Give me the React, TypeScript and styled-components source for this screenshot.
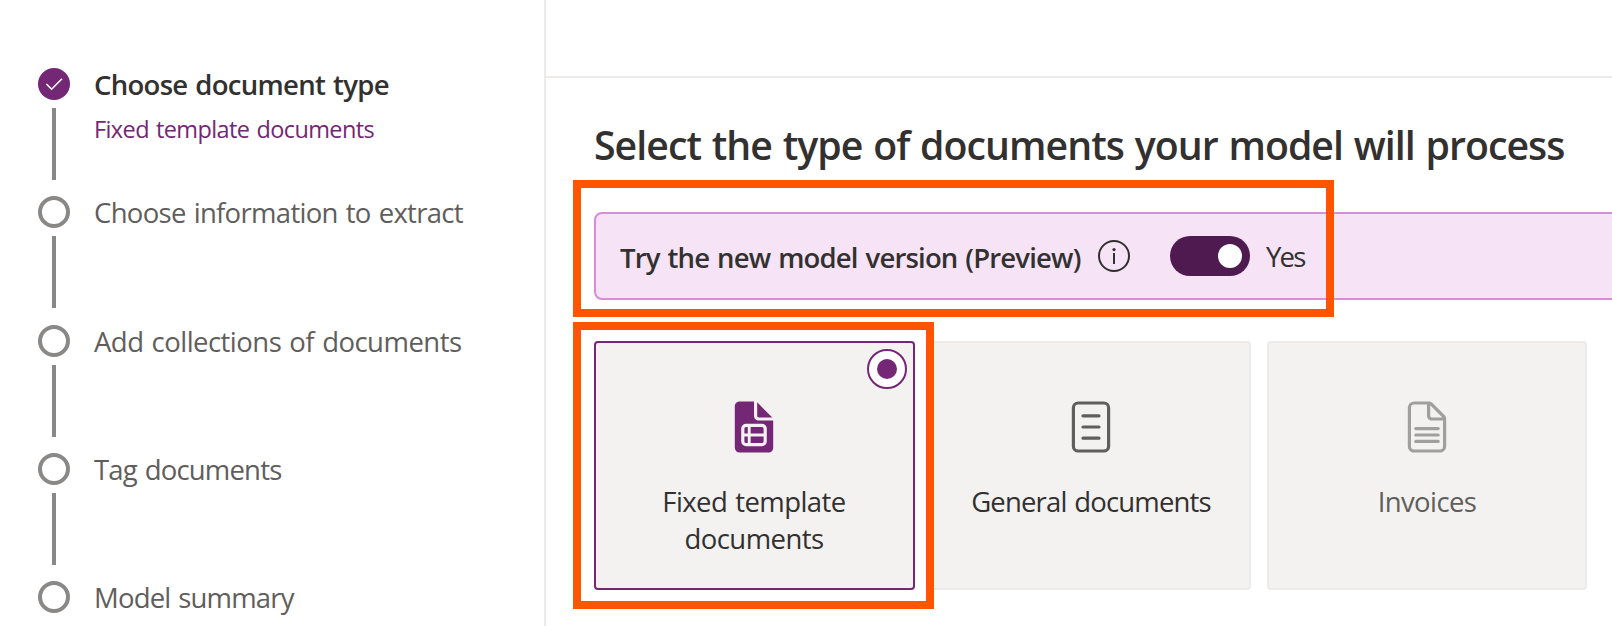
import React from "react";
import styled, { createGlobalStyle } from "styled-components";

const color = {
  purple: "#742774",
  deepPurple: "#4f1a4f",
  text: "#323130",
  muted: "#605e5c",
  disabled: "#a19f9d",
  rail: "#8a8886",
  line: "#edebe9",
  surface: "#f3f2f1",
  callout: "#ff5500",
};

const GlobalStyle = createGlobalStyle`
  *, *::before, *::after { box-sizing: border-box; }
  body {
    margin: 0;
    overflow: hidden;
    background: #fff;
    font-family: "Open Sans", "Noto Sans", sans-serif;
    word-spacing: 1.5px;
    color: ${color.text};
  }
`;

const Page = styled.div`
  position: relative;
  display: flex;
  width: 1612px;
  height: 626px;
  overflow: hidden;
`;

const Sidebar = styled.nav`
  flex: none;
  width: 546px;
  height: 100%;
  padding: 68px 0 0 38px;
  border-right: 2px solid ${color.line};
`;

const StepList = styled.ol`
  list-style: none;
  margin: 0;
  padding: 0;
`;

const Step = styled.li`
  display: flex;
  gap: 24px;
  height: 128.25px;
`;

const Rail = styled.div`
  display: flex;
  flex: none;
  flex-direction: column;
  align-items: center;
  gap: 8px;
  width: 32px;
`;

const StepCircle = styled.span<{ $done?: boolean }>`
  display: flex;
  flex: none;
  align-items: center;
  justify-content: center;
  width: 32px;
  height: 32px;
  border-radius: 50%;
  border: ${(p) => (p.$done ? "none" : `4px solid ${color.rail}`)};
  background: ${(p) => (p.$done ? color.purple : "#fff")};
`;

const Connector = styled.span`
  width: 4px;
  height: 72px;
  background: ${color.rail};
`;

const StepText = styled.div`
  margin-top: -1px;
  white-space: nowrap;
`;

const StepLabel = styled.div<{ $active?: boolean; $tracking: number }>`
  font-size: 27.5px;
  line-height: 36px;
  font-weight: ${(p) => (p.$active ? 600 : 400)};
  color: ${(p) => (p.$active ? color.text : color.muted)};
  letter-spacing: ${(p) => p.$tracking}px;
`;

const StepDetail = styled.div`
  margin-top: 10px;
  font-size: 23.5px;
  line-height: 32px;
  letter-spacing: -0.6px;
  color: ${color.purple};
`;

const Main = styled.main`
  flex: 1;
  min-width: 0;
`;

const TopBar = styled.div`
  height: 78px;
  border-bottom: 2px solid ${color.line};
`;

const Content = styled.section`
  padding: 41px 0 0 48px;
`;

const Title = styled.h1`
  margin: 0 0 41px;
  font-size: 39.25px;
  line-height: 52px;
  font-weight: 600;
  letter-spacing: -0.96px;
  white-space: nowrap;
`;

const PreviewBanner = styled.div`
  display: flex;
  align-items: center;
  width: 1100px;
  height: 88px;
  padding-left: 24px;
  border: 2px solid #d98cd9;
  border-radius: 8px;
  background: #f6e3f6;
  white-space: nowrap;
`;

const BannerLabel = styled.span`
  flex: none;
  width: 462px;
  margin-right: 16px;
  padding-top: 4px;
  font-size: 27.5px;
  line-height: 36px;
  font-weight: 600;
  letter-spacing: -0.82px;
`;

const Toggle = styled.button`
  display: flex;
  flex: none;
  align-items: center;
  justify-content: flex-end;
  width: 80px;
  height: 40px;
  margin: 0 16px 0 40px;
  padding: 0 8px;
  border: 0;
  border-radius: 20px;
  background: ${color.deepPurple};
`;

const Knob = styled.span`
  width: 24px;
  height: 24px;
  border-radius: 50%;
  background: #fff;
`;

const ToggleState = styled.span`
  padding-top: 2px;
  font-size: 27.5px;
  line-height: 36px;
  letter-spacing: -1.8px;
`;

const Cards = styled.div`
  display: grid;
  grid-template-columns: 321px 320px 320px;
  gap: 16px;
  margin-top: 41px;
`;

const Card = styled.div<{ $selected?: boolean; $disabled?: boolean }>`
  position: relative;
  display: flex;
  flex-direction: column;
  align-items: center;
  gap: 24px;
  height: 249px;
  padding: 52px ${(p) => (p.$selected ? 21 : 20)}px 0 20px;
  border: 2px solid ${(p) => (p.$selected ? color.purple : color.line)};
  border-radius: 4px;
  background: ${color.surface};
  color: ${(p) => (p.$disabled ? color.muted : color.text)};
`;

const CardIcon = styled.svg<{ $tone: string }>`
  flex: none;
  width: 64px;
  height: 64px;
  color: ${(p) => p.$tone};
`;

const CardLabel = styled.div<{ $tracking: number }>`
  font-size: 27.5px;
  line-height: 37px;
  text-align: center;
  letter-spacing: ${(p) => p.$tracking}px;
`;

const Radio = styled.span`
  position: absolute;
  top: 6px;
  right: 6px;
  display: flex;
  align-items: center;
  justify-content: center;
  width: 40px;
  height: 40px;
  border: 2px solid ${color.purple};
  border-radius: 50%;
  background: #fff;

  &::after {
    content: "";
    width: 20px;
    height: 20px;
    border-radius: 50%;
    background: ${color.purple};
  }
`;

const Callout = styled.div`
  position: absolute;
  left: 573px;
  border: 8px solid ${color.callout};
  pointer-events: none;
`;

const BannerCallout = styled(Callout)`
  top: 180px;
  width: 761px;
  height: 137px;
`;

const CardCallout = styled(Callout)`
  top: 322px;
  width: 361px;
  height: 287px;
`;

const CheckIcon = () => (
  <svg width="32" height="32" viewBox="0 0 32 32" fill="none" stroke="#fff" strokeWidth="1.6">
    <path d="M8.4 16l5.2 5.2L24 10.8" />
  </svg>
);

const InfoIcon = () => (
  <svg width="32" height="32" viewBox="0 0 32 32" fill="none" stroke={color.text}>
    <circle cx="16" cy="16" r="15" strokeWidth="2" />
    <path d="M16 13v11" strokeWidth="2" />
    <circle cx="16" cy="9.6" r="1.6" fill={color.text} stroke="none" />
  </svg>
);

const TableDocumentIcon = () => (
  <CardIcon $tone={color.purple} viewBox="0 0 20 20" fill="currentColor">
    <path d="M10 2v4.5c0 .83.67 1.5 1.5 1.5H16v8.5c0 .83-.67 1.5-1.5 1.5h-9A1.5 1.5 0 0 1 4 16.5v-13C4 2.67 4.67 2 5.5 2H10Z" />
    <path d="M11 2.3V6.5c0 .28.22.5.5.5h4.2L11 2.3Z" />
    <g fill="none" stroke={color.surface}>
      <rect x="6.5" y="9.5" width="7" height="6" rx="1" />
      <path d="M6.5 12.5h7M8.5 9.5v6" strokeWidth=".9" />
    </g>
  </CardIcon>
);

const LinedDocumentIcon = () => (
  <CardIcon $tone={color.muted} viewBox="0 0 20 20" fill="none" stroke="currentColor" strokeLinecap="round">
    <rect x="4.5" y="2.5" width="11" height="15" rx="1.5" />
    <path d="M7.5 6.5h5M7.5 10h5M7.5 13.5h5" />
  </CardIcon>
);

const InvoiceIcon = () => (
  <CardIcon $tone={color.disabled} viewBox="0 0 20 20" fill="currentColor">
    <path d="M6 2a2 2 0 0 0-2 2v12c0 1.1.9 2 2 2h8a2 2 0 0 0 2-2V7.41c0-.4-.16-.78-.44-1.06l-3.91-3.91A1.5 1.5 0 0 0 10.59 2H6ZM5 4a1 1 0 0 1 1-1h4v3.5c0 .83.67 1.5 1.5 1.5H15v8a1 1 0 0 1-1 1H6a1 1 0 0 1-1-1V4Zm9.8 3h-3.3a.5.5 0 0 1-.5-.5V3.2L14.8 7Z" />
    <path d="M6.5 10.5h7M6.5 12.5h7M6.5 14.5h7" fill="none" stroke="currentColor" strokeLinecap="round" />
  </CardIcon>
);

const steps = [
  { label: "Choose document type", detail: "Fixed template documents", tracking: -0.71 },
  { label: "Choose information to extract", tracking: -0.69 },
  { label: "Add collections of documents", tracking: -0.53 },
  { label: "Tag documents", tracking: -0.82 },
  { label: "Model summary", tracking: -0.82 },
];

export default function App() {
  return (
    <Page>
      <GlobalStyle />
      <Sidebar>
        <StepList>
          {steps.map((step, i) => (
            <Step key={step.label}>
              <Rail>
                <StepCircle $done={i === 0}>{i === 0 && <CheckIcon />}</StepCircle>
                {i < steps.length - 1 && <Connector />}
              </Rail>
              <StepText>
                <StepLabel $active={i === 0} $tracking={step.tracking}>
                  {step.label}
                </StepLabel>
                {step.detail && <StepDetail>{step.detail}</StepDetail>}
              </StepText>
            </Step>
          ))}
        </StepList>
      </Sidebar>
      <Main>
        <TopBar />
        <Content>
          <Title>Select the type of documents your model will process</Title>
          <PreviewBanner>
            <BannerLabel>Try the new model version (Preview)</BannerLabel>
            <InfoIcon />
            <Toggle role="switch" aria-checked="true">
              <Knob />
            </Toggle>
            <ToggleState>Yes</ToggleState>
          </PreviewBanner>
          <Cards>
            <Card $selected>
              <TableDocumentIcon />
              <CardLabel $tracking={-0.58}>Fixed template documents</CardLabel>
              <Radio />
            </Card>
            <Card>
              <LinedDocumentIcon />
              <CardLabel $tracking={-0.84}>General documents</CardLabel>
            </Card>
            <Card $disabled>
              <InvoiceIcon />
              <CardLabel $tracking={-0.6}>Invoices</CardLabel>
            </Card>
          </Cards>
        </Content>
      </Main>
      <BannerCallout />
      <CardCallout />
    </Page>
  );
}
